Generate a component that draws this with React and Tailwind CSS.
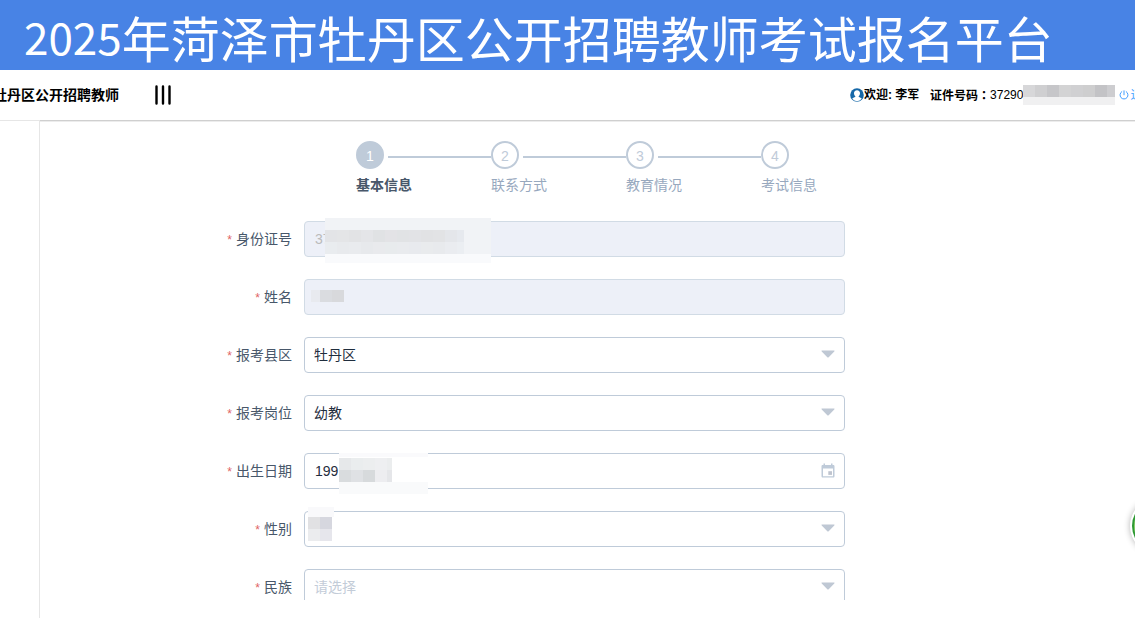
import { useState } from 'react';

const STEPS = ['基本信息', '联系方式', '教育情况', '考试信息'];

const FIELD = 'block w-full h-9 px-2.5 rounded border text-sm outline-none';
const EDITABLE = 'border-[#bfcbd9] bg-white text-[#1f2d3d]';
const DISABLED = 'border-[#d1dbe5] bg-[#edf0f8] text-[#bbbbbb]';

/* ── Icons ── */
function MenuIcon() {
  return (
    <svg width="18" height="22" viewBox="0 0 18 22" stroke="#000" strokeWidth="2.4" strokeLinecap="round">
      <path d="M2.5 2.5v17M9 2.5v17M15.5 2.5v17" />
    </svg>
  );
}

function UserIcon() {
  return (
    <svg className="shrink-0" width="14" height="14" viewBox="0 0 14 14">
      <circle cx="7" cy="7" r="6.8" fill="#1668a8" />
      <path d="M7 2.2c1.9 0 3 1.3 3 3.1 0 1.3-.6 2.3-1.3 2.9v.7c1.3.4 2.6.9 3.1 1.9A6.2 6.2 0 0 1 7 13.2a6.2 6.2 0 0 1-4.8-2.4c.5-1 1.8-1.5 3.1-1.9v-.7C4.6 7.6 4 6.6 4 5.3c0-1.8 1.1-3.1 3-3.1z" fill="#fff" />
    </svg>
  );
}

function PowerIcon() {
  return (
    <svg width="10" height="10" viewBox="0 0 10 10" fill="none" stroke="#409eff" strokeWidth="1" strokeLinecap="round">
      <path d="M5 .8v4M2.8 1.6a4 4 0 1 0 4.4 0" />
    </svg>
  );
}

function CaretIcon() {
  return (
    <svg className="absolute right-2.5 top-[13px] pointer-events-none" width="14" height="8" viewBox="0 0 14 8">
      <path d="M1 .5h12c.5 0 .7.5.3.9L7.7 7.2a1 1 0 0 1-1.4 0L.7 1.4C.3 1 .5.5 1 .5z" fill="#bfc8d4" />
    </svg>
  );
}

function CalendarIcon() {
  return (
    <svg className="absolute right-2.5 top-2.5 pointer-events-none" width="14" height="16" viewBox="0 0 14 16">
      <path fillRule="evenodd" d="M2.5.5H4V2h6V.5h1.5V2h.7c.8 0 1.3.5 1.3 1.3v10c0 .8-.5 1.3-1.3 1.3H1.8c-.8 0-1.3-.5-1.3-1.3v-10C.5 2.5 1 2 1.8 2h.7zM2 5.500v7.700h10V5.500z" fill="#bfcbd9" />
      <path d="M7.300 8.200H11v3.700H7.300z" fill="#bfc4cf" />
    </svg>
  );
}

/* ── Mosaic that hides private values ── */
function Mosaic({ rows, className }) {
  return (
    <span aria-hidden="true" className={className}>
      {rows.map((row, i) => (
        <span key={i} className="flex h-3">
          {row.map((color, j) => (
            <span key={j} className="w-3 h-3 shrink-0" style={{ backgroundColor: color }} />
          ))}
        </span>
      ))}
    </span>
  );
}

const ID_ROWS = [
  ['#e3e4e7', '#e4e5e7', '#e2e3e5', '#e4e5e8', '#e0e2e4', '#e3e3e6', '#e1e3e5', '#e2e3e6', '#e1e2e4', '#e2e3e5', '#e4e6ea', '#e6e9ee'],
  ['#e9ecef', '#e8eaed', '#e9ebee', '#e7e9ec', '#e9eaed', '#e8ebed', '#e9ebee', '#e8eaee', '#e9ebed', '#e8eaed', '#eaecf0', '#ebeef2'],
];
const NAME_ROWS = [['#dadce0', '#d8d9dc']];
const BIRTH_ROWS = [
  ['#e6e8ea', '#eaedee', '#eceeef', '#eeeff1', '#ebedee'],
  ['#d9dcde', '#dfe1e4', '#d7dadc', '#ededf0', '#e5e6e9'],
];
const GENDER_ROWS = [
  ['#e1e1e3', '#d6d7df'],
  ['#ebecee', '#e6e6ec'],
];
const CARD_ROWS = [['#d7d7d9', '#cfcfd1', '#c6c6c9', '#d3d3d4', '#d0d0d2', '#cececf', '#c3c3c6', '#cdcdd0']];

function FormItem({ id, label, children }) {
  return (
    <div className="flex items-center mb-[22px]">
      <label htmlFor={id} className="w-[120px] shrink-0 pr-3 text-right text-sm text-[#48576a]">
        <span className="mr-1 text-xs text-[#e06464]">*</span>
        {label}
      </label>
      <div className="relative flex-1 min-w-0">{children}</div>
    </div>
  );
}

function SelectBox({ id, value, onChange, options, placeholder }) {
  return (
    <>
      <select
        id={id}
        value={value}
        onChange={(e) => onChange(e.target.value)}
        className={`block w-full h-9 px-[9px] rounded border text-sm outline-none appearance-none border-[#bfcbd9] bg-white ${
          value || !placeholder ? 'text-[#1f2d3d]' : 'text-[#c3ccd8]'
        }`}
      >
        <option value="">{placeholder}</option>
        {options.map((o) => (
          <option key={o} value={o}>{o}</option>
        ))}
      </select>
      <CaretIcon />
    </>
  );
}

export default function App() {
  const [current] = useState(0);
  const [county, setCounty] = useState('牡丹区');
  const [post, setPost] = useState('幼教');
  const [birth, setBirth] = useState('199');
  const [gender, setGender] = useState('');
  const [nation, setNation] = useState('');

  return (
    <div className="relative h-screen flex flex-col overflow-hidden bg-white font-['Liberation_Sans','Noto_Sans_CJK_SC',sans-serif]">

      {/* ── Banner ── */}
      <h1 className="h-[70px] shrink-0 flex items-center pl-6 pt-0.5 bg-[#4883e5] text-white whitespace-nowrap font-['Noto_Sans_CJK_SC',sans-serif]">
        <span className="text-[44px] leading-none">2025</span>
        <span className="text-[49px] leading-none">年菏泽市牡丹区公开招聘教师考试报名平台</span>
      </h1>

      {/* ── Top bar ── */}
      <header className="h-[50px] shrink-0 flex items-center whitespace-nowrap text-black">
        <div className="w-[119px] flex justify-end overflow-hidden text-sm font-bold">
          <span>牡丹区公开招聘教师</span>
        </div>
        <button type="button" aria-label="菜单" className="ml-[35px]">
          <MenuIcon />
        </button>
        <div className="ml-auto w-[285px] flex items-center overflow-hidden text-xs">
          <UserIcon />
          <span className="w-[66px] shrink-0 font-bold">欢迎: 李军</span>
          <span className="shrink-0 font-bold">
            证件号码<span className="font-['Noto_Sans_CJK_TC',sans-serif]">：</span>
          </span>
          <span className="shrink-0">37290</span>
          <Mosaic rows={CARD_ROWS} className="shrink-0 w-[92px] h-5 mr-1 overflow-hidden bg-[#f0f0f1]" />
          <a href="#logout" className="flex items-center gap-px shrink-0 text-[#409eff]">
            <PowerIcon />
            退出
          </a>
        </div>
      </header>

      <div className="flex-1 min-h-0 flex">
        <aside className="w-10 shrink-0 border-t border-r border-[#e6e6e6]" />

        <main className="flex-1 min-w-0 mb-[18px] border-t border-[#cfcfcf] shadow-[inset_0_1px_0_#ececec] overflow-hidden">
          <div className="w-full max-w-[805px] pl-36 pt-5">

            {/* Steps */}
            <ol className="ml-[172px] flex">
              {STEPS.map((step, i) => (
                <li key={step} className={i < STEPS.length - 1 ? 'w-[135px] shrink-0' : 'shrink-0'}>
                  <div className="flex items-center">
                    <span
                      className={`w-7 h-7 shrink-0 rounded-full border-2 border-[#bfcbd9] flex items-center justify-center pt-0.5 text-sm ${
                        i === current ? 'bg-[#bfcbd9] text-white' : 'text-[#bfcbd9]'
                      }`}
                    >
                      {i + 1}
                    </span>
                    {i < STEPS.length - 1 && <span className="ml-1 mt-1 flex-1 h-0.5 bg-[#bfcbd9]" />}
                  </div>
                  <div className={`mt-1.5 text-sm whitespace-nowrap ${i === current ? 'font-bold text-[#48576a]' : 'text-[#97a8be]'}`}>
                    {step}
                  </div>
                </li>
              ))}
            </ol>

            {/* Form */}
            <form className="mt-[26px]">
              <FormItem id="idcard" label="身份证号">
                <input id="idcard" type="text" defaultValue="37" disabled className={`${FIELD} ${DISABLED}`} />
                <span className="absolute left-[21px] -top-[3px] w-[166px] h-9 bg-[#f1f3f6]" />
                <span className="absolute left-[21px] top-[33px] w-[166px] h-[9px] bg-[#f9fafc]" />
                <Mosaic rows={ID_ROWS} className="absolute left-[21px] top-[9px] w-[139px] overflow-hidden" />
              </FormItem>

              <FormItem id="name" label="姓名">
                <input id="name" type="text" disabled className={`${FIELD} ${DISABLED}`} />
                <Mosaic rows={NAME_ROWS} className="absolute left-[7px] top-[11px] pl-[9px] bg-[#e8eaef]" />
              </FormItem>

              <FormItem id="county" label="报考县区">
                <SelectBox id="county" value={county} onChange={setCounty} options={['牡丹区']} />
              </FormItem>

              <FormItem id="post" label="报考岗位">
                <SelectBox id="post" value={post} onChange={setPost} options={['幼教']} />
              </FormItem>

              <FormItem id="birth" label="出生日期">
                <input
                  id="birth"
                  type="text"
                  value={birth}
                  onChange={(e) => setBirth(e.target.value)}
                  className={`${FIELD} ${EDITABLE}`}
                />
                <span className="absolute left-[35px] top-0 w-[89px] h-1 bg-[#fafafc]" />
                <span className="absolute left-[35px] top-[29px] w-[89px] h-3 bg-[#f9fafb]" />
                <Mosaic rows={BIRTH_ROWS} className="absolute left-[35px] top-[5px] w-[53px] overflow-hidden" />
                <CalendarIcon />
              </FormItem>

              <FormItem id="gender" label="性别">
                <SelectBox id="gender" value={gender} onChange={setGender} options={['男', '女']} />
                <span className="absolute left-1 -top-1 w-[26px] h-[10px] bg-[#f9f9fb]" />
                <Mosaic rows={GENDER_ROWS} className="absolute left-1 top-1.5" />
              </FormItem>

              <FormItem id="nation" label="民族">
                <SelectBox id="nation" value={nation} onChange={setNation} options={['汉族']} placeholder="请选择" />
              </FormItem>
            </form>
          </div>
        </main>
      </div>

      {/* ── Floating helper ── */}
      <button
        type="button"
        aria-label="助手"
        className="absolute -right-[51px] bottom-16 w-14 h-14 p-0.5 rounded-full bg-white shadow-[0_0_6px_rgba(0,0,0,0.3)]"
      >
        <span className="block w-full h-full rounded-full border-2 border-[#2f9a35] bg-[#8fd06f]" />
      </button>
    </div>
  );
}
